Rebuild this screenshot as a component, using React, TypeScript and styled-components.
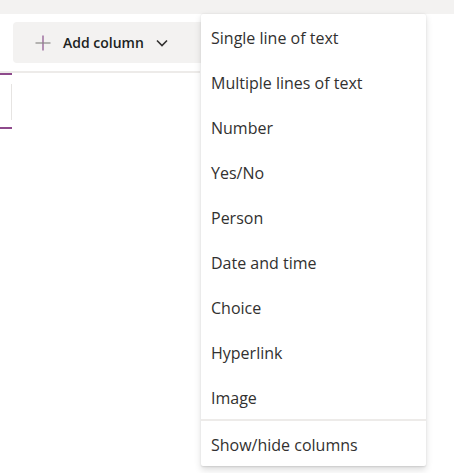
import React from "react";
import styled, { createGlobalStyle } from "styled-components";

const Global = createGlobalStyle`
  html, body { margin: 0; padding: 0; background: #ffffff; }
  body { font-family: "Open Sans", "Noto Sans", sans-serif; width: 454px; height: 473px; overflow: hidden; }
`;

const Page = styled.div`
  position: relative;
  width: 454px;
  height: 473px;
  display: flex;
  flex-direction: column;
`;

const TopBand = styled.div`
  height: 14px;
  background: #f3f2f1;
  flex: none;
`;

const Content = styled.div`
  display: flex;
  flex-direction: column;
  padding-top: 8px;
`;

const CommandBar = styled.div`
  display: flex;
  padding-left: 13px;
  height: 41px;
`;

const AddButton = styled.button`
  display: flex;
  align-items: center;
  width: 200px;
  height: 41px;
  border: none;
  border-radius: 4px;
  background: #f3f2f1;
  padding: 0 0 0 22px;
  gap: 12px;
  font-family: "Open Sans", sans-serif;
  font-size: 14px;
  font-weight: 600;
  color: #201f1e;
  cursor: pointer;
`;

const HeaderRule = styled.div`
  margin-top: 8px;
  width: 200px;
  height: 2px;
  background: #edebe9;
`;

const Card = styled.div`
  width: 12px;
  height: 56px;
  border-top: 2px solid #8e4a8c;
  border-bottom: 2px solid #8e4a8c;
  display: flex;
  justify-content: flex-end;
  padding: 9px 0 7px;
  box-sizing: border-box;
`;

const CardEdge = styled.div`
  width: 1px;
  background: #e6e4e2;
`;

const Menu = styled.ul`
  position: absolute;
  top: 14px;
  left: 201px;
  width: 225px;
  margin: 0;
  padding: 0;
  list-style: none;
  background: #ffffff;
  box-shadow: 0 3.2px 7.2px rgba(0, 0, 0, 0.13), 0 0.6px 1.8px rgba(0, 0, 0, 0.11);
  border-radius: 2px;
`;

const Item = styled.li`
  height: 45px;
  box-sizing: border-box;
  padding: 2px 0 0 10px;
  display: flex;
  align-items: center;
  font-size: 16px;
  color: #323130;
  font-family: "Open Sans", sans-serif;
`;

const Divider = styled.li`
  height: 2px;
  background: #edebe9;
`;

const items = [
  "Single line of text",
  "Multiple lines of text",
  "Number",
  "Yes/No",
  "Person",
  "Date and time",
  "Choice",
  "Hyperlink",
  "Image",
];

export default function App() {
  return (
    <>
      <Global />
      <Page>
        <TopBand />
        <Content>
          <CommandBar>
            <AddButton>
              <svg width="16" height="16" viewBox="0 0 16 16">
                <path d="M8 0.5v15" stroke="#8a4f8c" strokeWidth="1.2" />
                <path d="M0.5 8h15" stroke="#8a8886" strokeWidth="1.2" />
              </svg>
              <span>Add column</span>
              <svg width="12" height="8" viewBox="0 0 12 8">
                <path d="M1 1.5l5 5 5-5" fill="none" stroke="#323130" strokeWidth="1.6" />
              </svg>
            </AddButton>
          </CommandBar>
          <HeaderRule />
          <Card>
            <CardEdge />
          </Card>
        </Content>
        <Menu>
          {items.map((t) => (
            <Item key={t}>{t}</Item>
          ))}
          <Divider />
          <Item>Show/hide columns</Item>
        </Menu>
      </Page>
    </>
  );
}
